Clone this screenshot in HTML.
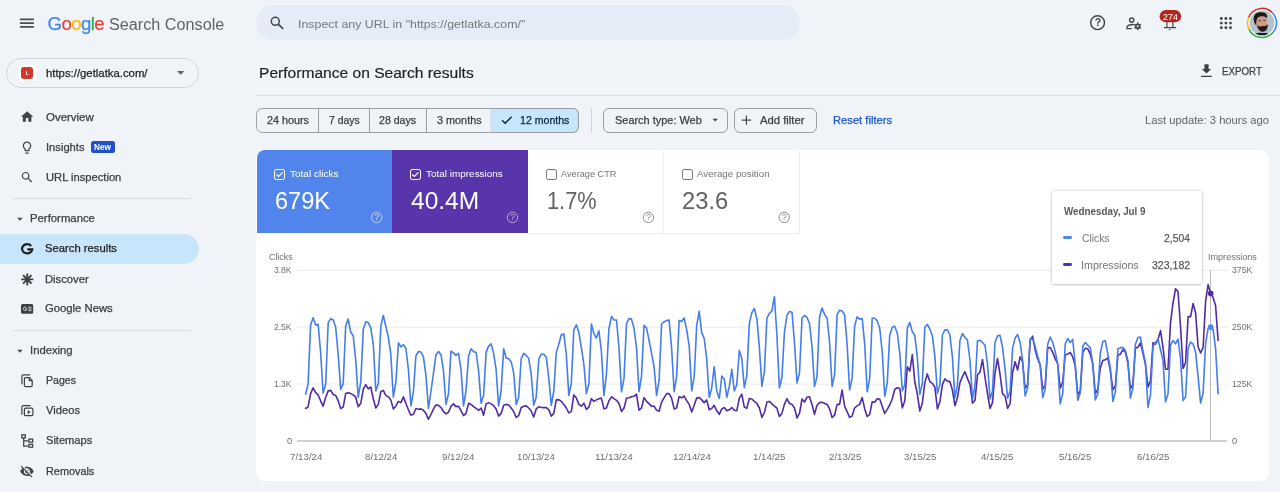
<!DOCTYPE html>
<html lang="en"><head><meta charset="utf-8"><title>Performance on Search results</title>
<style>
*{box-sizing:border-box;margin:0;padding:0}
html,body{width:1280px;height:492px;overflow:hidden;background:#f0f4f9;font-family:"Liberation Sans",sans-serif;color:#1f1f1f}
.abs{position:absolute}
.t{position:absolute;white-space:nowrap;line-height:1;transform-origin:0 0}
svg{position:absolute;overflow:visible}
#search{left:255.5px;top:5.1px;width:544.4px;height:35.3px;border-radius:17.65px;background:#e5ecf8}
#prop{left:6.2px;top:58px;width:192.6px;height:29.8px;border-radius:15px;border:1px solid #cfd3d8}
.hr{position:absolute;left:12.5px;width:177.5px;height:1px;background:#d9dce1}
#sel{left:0;top:234px;width:199px;height:30px;border-radius:0 15px 15px 0;background:#c7e6fc}
#mainhr{left:256px;top:95px;width:1024px;height:1px;background:#dcdfe4}
.chip{position:absolute;top:107.6px;height:25.1px;border:1px solid #9b9ea4}
#card{left:255.6px;top:149.5px;width:1013.5px;height:331.4px;border-radius:9px;background:#fff}
.tile{position:absolute;top:150.1px;height:82.9px}
.cb{position:absolute;top:168.9px;width:10.9px;height:10.9px;border-radius:2.2px}
#tip{left:1051.7px;top:191px;width:150px;height:93.4px;background:rgba(255,255,255,.94);border-radius:2px;box-shadow:0 0 3px rgba(0,0,0,.28),0 1px 2px rgba(0,0,0,.12);z-index:4}
#root{position:absolute;left:0;top:0;width:1280px;height:492px;will-change:transform}
</style></head><body><div id="root">
<!-- header -->
<svg style="left:0;top:0" width="1280" height="100" viewBox="0 0 1280 100">
<path d="M19.9 19.4h14M19.9 23.1h14M19.9 26.85h14" stroke="#4d5053" stroke-width="1.7" fill="none"/>
</svg>
<div class="t" style="left:47.6px;top:14.9px;font-size:18.6px;letter-spacing:-.62px;-webkit-text-stroke:.25px"><span style="color:#4285f4">G</span><span style="color:#ea4335">o</span><span style="color:#fbbc05">o</span><span style="color:#4285f4">g</span><span style="color:#34a853">l</span><span style="color:#ea4335">e</span></div>
<div class="abs" id="search"></div>
<svg style="left:270.2px;top:15.8px" width="14" height="14" viewBox="0 0 14 14"><circle cx="5.3" cy="5.3" r="4" stroke="#444746" stroke-width="1.5" fill="none"/><path d="M8.2 8.2l5 4.700" stroke="#444746" stroke-width="1.6"/></svg>


<!-- header right icons -->
<svg style="left:0;top:0;z-index:3" width="1280" height="100" viewBox="0 0 1280 100">
<circle cx="1097.600" cy="22.700" r="6.900" fill="none" stroke="#444746" stroke-width="1.450"/>
<!-- person + gear -->
<g fill="none" stroke="#444746" stroke-width="1.400">
<circle cx="1131.700" cy="20.100" r="2.100"/>
<path d="M1134.500 24.600C1131 24.100 1127 25.300 1127 27.300V28.600H1131.800"/>
</g>
<g transform="translate(1137.700 26.300)" fill="#444746">
<circle r="2.550"/>
<g id="tooth"><rect x="-.85" y="-3.700" width="1.700" height="7.400" rx=".3"/></g>
<rect x="-.85" y="-3.700" width="1.700" height="7.400" rx=".3" transform="rotate(60)"/>
<rect x="-.85" y="-3.700" width="1.700" height="7.400" rx=".3" transform="rotate(120)"/>
<circle r="1" fill="#f0f4f9"/>
</g>
<!-- bell -->
<g fill="none" stroke="#444746" stroke-width="1.200">
<path d="M1166.900 20V27.400M1172.900 20V27.400M1163.900 27.550H1176.100"/>
</g>
<path d="M1168.500 29.300h2.600l-1.300 1.200z" fill="#444746"/>
<rect x="1159.600" y="10.100" width="21.500" height="12.200" rx="6.100" fill="#b3261e"/>
<!-- apps -->
<g fill="#444746">
<circle cx="1221.300" cy="18.500" r="1.450"/><circle cx="1225.900" cy="18.500" r="1.450"/><circle cx="1230.500" cy="18.500" r="1.450"/>
<circle cx="1221.300" cy="23.100" r="1.450"/><circle cx="1225.900" cy="23.100" r="1.450"/><circle cx="1230.500" cy="23.100" r="1.450"/>
<circle cx="1221.300" cy="27.700" r="1.450"/><circle cx="1225.900" cy="27.700" r="1.450"/><circle cx="1230.500" cy="27.700" r="1.450"/>
</g>
<!-- avatar -->
<g transform="translate(1262.050 22.950)">
<circle r="15.100" fill="#fff"/>
<g fill="none" stroke-width="1.600">
<path d="M-13.430 -5.430A14.500 14.500 0 0 1 10.250 -10.250" stroke="#d93025"/>
<path d="M10.250 -10.250A14.500 14.500 0 0 1 11.100 9.320" stroke="#4285f4"/>
<path d="M11.100 9.320A14.500 14.500 0 0 1 -13.140 6.130" stroke="#34a853"/>
<path d="M-13.140 6.130A14.500 14.500 0 0 1 -13.430 -5.430" stroke="#fbbc04"/>
</g>
<clipPath id="avc"><circle r="12.400"/></clipPath>
<g clip-path="url(#avc)">
<rect x="-13" y="-13" width="26" height="26" fill="#b3c2ce"/>
<path d="M-9 13C-8 10 -4 9.600 -1 10C3 9.800 8 10 10 13z" fill="#1a1a1c"/>
<ellipse cx="-.5" cy="-.5" rx="5.900" ry="7.600" fill="#cf9a82" transform="rotate(-10)"/>
<path d="M-7.800 -.5C-10 -7.500 -5.500 -11.800 -.5 -10.600C3.500 -11 5.800 -8 5 -4.800C2.500 -7.200 -1.500 -7.400 -4 -5.600C-5.600 -4.200 -6 -.5 -5.900 2.500z" fill="#1c1818"/>
<path d="M-5.200 1.500C-4.800 5.500 -2.500 8.800 .8 8.700C4.200 8.300 6 5.500 5.600 1C4.500 3.400 2.600 3.200 1 3C-1 3.300 -3.600 4.600 -5.200 1.500z" fill="#241b19"/>
<path d="M-3.600 -2.200h2.200M1.200 -2.600h2.200" stroke="#3a2620" stroke-width=".9" fill="none"/>
</g>
</g>
<!-- export -->
<path d="M1204.400 64.300h4.200v4.700h2.500l-4.600 4.600-4.600-4.600h2.500z M1201.100 75.700h10.700v1.400h-10.700z" fill="#3c4043"/>
</svg>
<div class="t" style="left:1094.700px;top:17.400px;font-size:10.500px;color:#444746;font-weight:700;z-index:3">?</div>

<!-- property -->
<div class="abs" id="prop"></div>
<div class="abs" style="left:18.75px;top:64.65px;width:17.35px;height:16.85px;border-radius:1.5px;background:#fff"></div>
<div class="abs" style="left:21.1px;top:66.8px;width:12.4px;height:12.2px;border-radius:3px;background:#d0382c"></div>
<svg style="left:176.9px;top:71.2px" width="7.4" height="3.8" viewBox="0 0 8 4"><path d="M0 0h8L4 4z" fill="#5f6368"/></svg>

<!-- nav -->
<div class="hr" style="top:198px"></div>
<div class="abs" id="sel"></div>
<div class="hr" style="top:330px"></div>
<div class="abs" style="left:91.1px;top:140.9px;width:23.5px;height:12.2px;border-radius:2.5px;background:#2250c9"></div>


<!-- nav icons -->
<svg style="left:0;top:0" width="240" height="492" viewBox="0 0 240 492" fill="#424547">
<g transform="translate(19.8 109.5) scale(.61)"><path d="M10 20v-6h4v6h5v-8h3L12 3 2 12h3v8z"/></g>
<g transform="translate(19.7 140.3) scale(.61)"><path d="M9 21c0 .55.45 1 1 1h4c.55 0 1-.45 1-1v-1H9v1zm3-19C8.14 2 5 5.14 5 9c0 2.38 1.19 4.47 3 5.74V17c0 .55.45 1 1 1h6c.55 0 1-.45 1-1v-2.26c1.81-1.27 3-3.36 3-5.74 0-3.86-3.14-7-7-7zm2.85 11.1l-.85.6V16h-4v-2.3l-.85-.6C7.8 12.16 7 10.63 7 9c0-2.76 2.24-5 5-5s5 2.24 5 5c0 1.63-.8 3.16-2.15 4.1z"/></g>
<g transform="translate(19.9 170.1) scale(.6)"><path d="M15.5 14h-.79l-.28-.27C15.41 12.59 16 11.11 16 9.5 16 5.91 13.09 3 9.500 3S3 5.91 3 9.500 5.91 16 9.500 16c1.610 0 3.090-.59 4.230-1.570l.27.28v.79l5 4.990L20.490 19l-4.990-5zm-6 0C7.010 14 5 11.990 5 9.500S7.010 5 9.500 5 14 7.010 14 9.500 11.990 14 9.500 14z"/></g>
<!-- triangles -->
<path d="M17.200 217.800h5.400l-2.700 3z M17.200 349.700h5.400l-2.700 3z" fill="#444746"/>
<!-- G -->
<path d="M31.200 245.900A5.150 4.550 0 1 0 32.300 249.300H27.300" fill="none" stroke="#1f1f1f" stroke-width="2.200"/>
<!-- asterisk -->
<g stroke="#3c4043" stroke-width="1.900" fill="none"><path d="M27.300 273.400v12M21.300 279.400h12M23.060 275.160l8.480 8.480M31.540 275.160l-8.480 8.480"/></g>
<!-- news -->
<rect x="21" y="304" width="12.200" height="9.700" rx="1.500" fill="#3c4043"/>
<path d="M26.300 307.500A1.700 1.700 0 1 0 26.800 308.900H25.200" fill="none" stroke="#f0f4f9" stroke-width=".8"/>
<path d="M28.300 307.200h3.200M28.300 308.900h3.200M28.300 310.600h3.200" stroke="#f0f4f9" stroke-width=".8" fill="none"/>
<!-- pages -->
<g fill="none" stroke="#3c4043" stroke-width="1.200" stroke-linejoin="round">
<path d="M30 374.900H23.400a1.500 1.500 0 0 0-1.500 1.500V384.300"/>
<path d="M25.600 377.600H29.500L32.200 380.400V385.500a1.200 1.200 0 0 1-1.200 1.200H25.600a1.200 1.200 0 0 1-1.200-1.200V378.800a1.200 1.200 0 0 1 1.200-1.200z"/>
<path d="M29.300 377.800V380.600H32"/>
<!-- videos -->
<path d="M30.600 405.600H23.400a1.500 1.500 0 0 0-1.500 1.500V414.800"/>
<rect x="24.400" y="408.100" width="8.500" height="7.500" rx="1.100"/>
</g>
<path d="M27.700 409.900L30.700 412.100L27.700 414.300z"/>
<!-- sitemaps -->
<g fill="none" stroke="#3c4043" stroke-width="1.250">
<rect x="21.850" y="434.850" width="3.500" height="3.100"/>
<path d="M23.700 438V446H28.300M23.700 440.800H28.300"/>
<rect x="28.850" y="439.150" width="3.800" height="3"/>
<rect x="28.850" y="444.350" width="3.800" height="2.800"/>
</g>
<!-- removals -->
<g transform="translate(19.500 463.900) scale(.62)"><path d="M12 7c2.760 0 5 2.240 5 5 0 .65-.13 1.260-.36 1.830l2.920 2.920c1.510-1.260 2.700-2.890 3.430-4.750-1.730-4.390-6-7.500-11-7.500-1.400 0-2.740.25-3.980.7l2.160 2.160C10.740 7.130 11.350 7 12 7zM2 4.270l2.280 2.280.46.46C3.080 8.300 1.780 10.020 1 12c1.730 4.390 6 7.500 11 7.500 1.550 0 3.030-.3 4.380-.84l.42.42L19.730 22 21 20.730 3.270 3 2 4.270zM7.530 9.800l1.550 1.550c-.05.21-.08.43-.08.65 0 1.660 1.340 3 3 3 .22 0 .44-.03.65-.08l1.550 1.550c-.67.33-1.410.53-2.200.53-2.760 0-5-2.240-5-5 0-.79.200-1.530.53-2.200zm4.310-.78l3.150 3.150.02-.16c0-1.660-1.340-3-3-3l-.17.010z"/></g>
</svg>

<!-- main -->
<div class="abs" id="mainhr"></div>
<div class="chip" style="left:255.8px;width:323px;border-radius:6.5px"></div>
<div class="chip" style="left:489.7px;width:89.1px;border-radius:0 6px 6px 0;background:#c7e6fc;border-left-color:#d5dde6"></div>
<div class="abs" style="left:318px;top:108px;width:1px;height:24.5px;background:#9b9ea4"></div>
<div class="abs" style="left:369px;top:108px;width:1px;height:24.5px;background:#9b9ea4"></div>
<div class="abs" style="left:425.6px;top:108px;width:1px;height:24.5px;background:#9b9ea4"></div>
<div class="abs" style="left:591px;top:108px;width:1px;height:24.5px;background:#d0d4d9"></div>
<div class="chip" style="left:603px;width:124.5px;border-radius:6px"></div>
<div class="chip" style="left:733.8px;width:83px;border-radius:6px"></div>

<div class="abs" id="card"></div>
<div class="tile" style="left:256.6px;width:136px;background:#5285ec;border-radius:8px 0 0 0"></div>
<div class="tile" style="left:392.4px;width:135.6px;background:#5935ab"></div>
<div class="abs" style="left:528px;top:232.5px;width:272px;height:1px;background:#ebebeb"></div>
<div class="abs" style="left:663px;top:150px;width:1px;height:83px;background:#efefef"></div>
<div class="abs" style="left:799px;top:150px;width:1px;height:83.5px;background:#ebebeb"></div>
<div class="cb" style="left:274.1px;border:1.4px solid #fff"></div>
<div class="cb" style="left:409.8px;border:1.4px solid #fff"></div>
<div class="cb" style="left:546px;border:1.2px solid #757575"></div>
<div class="cb" style="left:682px;border:1.2px solid #757575"></div>

<svg id="chart" style="left:0;top:0" width="1280" height="492" viewBox="0 0 1280 492">
<g stroke="#ebebeb" stroke-width="1" fill="none"><path d="M297 270.3H1227.5M297 327.2H1227.5M297 384.1H1227.5"/></g>
<path d="M297 441H1227" stroke="#a6a6a6" stroke-width="1.1" fill="none"/>
<path d="M1210.5 270V441" stroke="#bcbcbc" stroke-width="1" fill="none"/>
<path d="M305.6 408.5 L308.1 406.8 L310.6 393.6 L313.1 387.9 L315.6 392.7 L318.1 394.9 L320.6 400.8 L323.1 406.2 L325.7 397.2 L328.2 390.9 L330.7 390.4 L333.2 394.5 L335.7 395.4 L338.2 400.8 L340.7 408.5 L343.2 407.1 L345.7 393.6 L348.2 392.7 L350.7 393.6 L353.2 394.9 L355.7 397.2 L358.2 406.8 L360.8 403.2 L363.3 389.1 L365.8 384.6 L368.3 388.8 L370.8 387.0 L373.3 399.0 L375.8 408.0 L378.3 404.4 L380.8 391.8 L383.3 390.4 L385.8 395.4 L388.3 396.7 L390.8 399.9 L393.3 408.9 L395.9 405.9 L398.4 401.4 L400.9 402.6 L403.4 396.9 L405.9 403.5 L408.4 409.8 L410.9 415.2 L413.4 414.3 L415.9 408.5 L418.4 409.3 L420.9 408.9 L423.4 410.3 L425.9 413.4 L428.4 419.2 L431.0 414.3 L433.5 408.9 L436.0 405.0 L438.5 405.3 L441.0 407.5 L443.5 411.6 L446.0 413.9 L448.5 412.1 L451.0 406.2 L453.5 403.9 L456.0 406.6 L458.5 406.2 L461.0 410.7 L463.5 415.6 L466.0 413.4 L468.6 403.2 L471.1 404.4 L473.6 406.6 L476.1 408.4 L478.6 410.3 L481.1 408.0 L483.6 415.2 L486.1 403.9 L488.6 402.6 L491.1 403.9 L493.6 405.7 L496.1 408.9 L498.6 416.1 L501.1 413.4 L503.7 405.3 L506.2 404.4 L508.7 405.0 L511.2 408.0 L513.7 411.6 L516.2 417.4 L518.7 415.7 L521.2 407.5 L523.7 406.2 L526.2 405.9 L528.7 408.0 L531.2 411.0 L533.7 417.0 L536.2 408.9 L538.8 406.8 L541.3 407.5 L543.8 407.6 L546.3 407.6 L548.8 409.8 L551.3 416.1 L553.8 413.4 L556.3 399.9 L558.8 399.6 L561.3 401.4 L563.8 404.4 L566.3 408.0 L568.8 412.9 L571.3 411.6 L573.8 394.9 L576.4 398.1 L578.9 404.4 L581.4 406.2 L583.9 403.2 L586.4 409.4 L588.9 407.1 L591.4 398.5 L593.9 401.4 L596.4 399.9 L598.9 398.7 L601.4 398.1 L603.9 408.9 L606.4 408.0 L608.9 400.8 L611.5 396.9 L614.0 398.7 L616.5 400.3 L619.0 403.5 L621.5 411.6 L624.0 408.0 L626.5 398.1 L629.0 397.8 L631.5 396.7 L634.0 396.3 L636.5 394.2 L639.0 410.2 L641.5 408.0 L644.0 397.8 L646.6 401.4 L649.1 403.9 L651.6 406.2 L654.1 406.2 L656.6 410.3 L659.1 411.2 L661.6 402.1 L664.1 397.8 L666.6 393.6 L669.1 393.6 L671.6 398.1 L674.1 408.9 L676.6 408.0 L679.1 396.7 L681.7 397.8 L684.2 396.0 L686.7 400.8 L689.2 404.4 L691.7 412.0 L694.2 405.3 L696.7 398.1 L699.2 397.6 L701.7 399.9 L704.2 402.6 L706.7 399.9 L709.2 409.8 L711.7 408.4 L714.2 405.3 L716.7 410.7 L719.3 414.3 L721.8 408.9 L724.3 407.5 L726.8 410.7 L729.3 409.8 L731.8 407.5 L734.3 410.3 L736.8 410.7 L739.3 398.1 L741.8 394.2 L744.3 407.1 L746.8 408.4 L749.3 398.5 L751.8 399.0 L754.4 401.4 L756.9 403.5 L759.4 408.0 L761.9 417.4 L764.4 412.5 L766.9 402.1 L769.4 401.4 L771.9 403.9 L774.4 406.2 L776.9 408.0 L779.4 416.5 L781.9 413.4 L784.4 404.4 L786.9 398.7 L789.5 403.5 L792.0 404.4 L794.5 408.0 L797.0 417.9 L799.5 413.4 L802.0 399.0 L804.5 402.1 L807.0 397.2 L809.5 396.7 L812.0 404.4 L814.5 414.3 L817.0 405.3 L819.5 402.6 L822.0 402.3 L824.5 403.2 L827.1 404.4 L829.6 408.9 L832.1 417.5 L834.6 415.2 L837.1 404.4 L839.6 404.4 L842.1 390.0 L844.6 406.2 L847.1 411.6 L849.6 417.4 L852.1 416.1 L854.6 408.0 L857.1 405.9 L859.6 404.4 L862.2 397.6 L864.7 408.9 L867.2 416.5 L869.7 414.3 L872.2 401.7 L874.7 402.3 L877.2 398.7 L879.7 399.0 L882.2 406.2 L884.7 413.4 L887.2 409.4 L889.7 405.0 L892.2 399.0 L894.7 389.5 L897.3 387.7 L899.8 388.6 L902.3 408.0 L904.8 400.8 L907.3 366.7 L909.8 371.2 L912.3 354.5 L914.8 382.0 L917.3 393.6 L919.8 411.1 L922.3 403.5 L924.8 382.9 L927.3 373.9 L929.8 381.6 L932.4 383.4 L934.9 387.3 L937.4 408.9 L939.9 401.7 L942.4 384.6 L944.9 378.9 L947.4 381.1 L949.9 381.6 L952.4 390.0 L954.9 405.7 L957.4 398.1 L959.9 382.9 L962.4 376.6 L964.9 371.6 L967.4 378.4 L970.0 384.6 L972.5 403.2 L975.0 400.3 L977.5 374.8 L980.0 372.1 L982.5 359.5 L985.0 377.5 L987.5 393.6 L990.0 408.4 L992.5 402.6 L995.0 373.0 L997.5 358.5 L1000.0 374.0 L1002.5 393.6 L1005.1 396.3 L1007.6 408.4 L1010.1 403.5 L1012.6 372.5 L1015.1 361.8 L1017.6 370.0 L1020.1 356.8 L1022.6 362.0 L1025.1 388.2 L1027.6 384.6 L1030.1 340.7 L1032.6 336.2 L1035.1 349.7 L1037.6 358.7 L1040.2 365.0 L1042.7 389.1 L1045.2 385.5 L1047.7 347.9 L1050.2 347.5 L1052.7 352.4 L1055.2 358.7 L1057.7 364.0 L1060.2 388.2 L1062.7 382.0 L1065.2 354.7 L1067.7 354.2 L1070.2 352.4 L1072.7 356.9 L1075.2 365.9 L1077.8 394.5 L1080.3 391.0 L1082.8 352.4 L1085.3 348.3 L1087.8 348.8 L1090.3 354.2 L1092.8 364.0 L1095.3 393.6 L1097.8 389.1 L1100.3 368.0 L1102.8 360.5 L1105.3 359.8 L1107.8 357.8 L1110.3 370.3 L1112.9 389.8 L1115.4 385.6 L1117.9 355.1 L1120.4 354.2 L1122.9 349.7 L1125.4 352.4 L1127.9 363.0 L1130.4 388.5 L1132.9 384.3 L1135.4 347.9 L1137.9 347.4 L1140.4 342.9 L1142.9 353.3 L1145.4 364.0 L1148.0 387.0 L1150.5 380.7 L1153.0 342.6 L1155.5 344.2 L1158.0 339.6 L1160.5 330.6 L1163.0 347.4 L1165.5 369.2 L1168.0 369.2 L1170.5 322.8 L1173.0 303.0 L1175.5 288.9 L1178.0 291.5 L1180.5 326.5 L1183.1 368.5 L1185.6 362.5 L1188.1 316.5 L1190.6 316.6 L1193.1 303.5 L1195.6 313.0 L1198.1 346.8 L1200.6 353.0 L1203.1 347.5 L1205.6 301.1 L1208.1 284.6 L1210.6 293.4 L1213.1 297.4 L1215.6 305.7 L1218.1 340.4" stroke="#502ba7" stroke-width="1.6" fill="none" stroke-linejoin="round" stroke-linecap="round"/>
<path d="M305.6 394.2 L308.1 383.7 L310.6 324.9 L313.1 317.7 L315.6 324.9 L318.1 324.2 L320.6 352.0 L323.1 393.1 L325.7 383.7 L328.2 322.7 L330.7 318.6 L333.2 320.0 L335.7 327.2 L338.2 355.0 L340.7 389.5 L343.2 383.7 L345.7 326.0 L348.2 319.1 L350.7 332.0 L353.2 335.7 L355.7 360.0 L358.2 397.2 L360.8 382.0 L363.3 329.0 L365.8 321.8 L368.3 322.7 L370.8 328.1 L373.3 344.3 L375.8 391.0 L378.3 383.7 L380.8 326.3 L383.3 315.5 L385.8 326.3 L388.3 337.1 L390.8 354.2 L393.3 397.2 L395.9 382.0 L398.4 342.9 L400.9 347.0 L403.4 344.7 L405.9 348.3 L408.4 369.5 L410.9 405.9 L413.4 391.8 L415.9 356.0 L418.4 351.5 L420.9 352.0 L423.4 356.9 L425.9 374.8 L428.4 408.4 L431.0 391.0 L433.5 373.0 L436.0 354.7 L438.5 351.5 L441.0 354.7 L443.5 371.0 L446.0 404.4 L448.5 393.6 L451.0 351.1 L453.5 352.9 L456.0 355.4 L458.5 353.3 L461.0 369.4 L463.5 405.9 L466.0 391.0 L468.6 356.0 L471.1 348.8 L473.6 351.8 L476.1 352.4 L478.6 371.0 L481.1 403.2 L483.6 395.4 L486.1 352.4 L488.6 346.1 L491.1 343.9 L493.6 353.3 L496.1 369.5 L498.6 405.9 L501.1 391.0 L503.7 348.8 L506.2 358.3 L508.7 358.7 L511.2 361.9 L513.7 373.0 L516.2 404.4 L518.7 397.2 L521.2 358.7 L523.7 353.3 L526.2 355.4 L528.7 358.3 L531.2 374.0 L533.7 405.3 L536.2 397.2 L538.8 359.0 L541.3 354.2 L543.8 354.2 L546.3 357.2 L548.8 378.4 L551.3 405.3 L553.8 391.0 L556.3 352.4 L558.8 344.3 L561.3 334.8 L563.8 333.9 L566.3 354.2 L568.8 395.4 L571.3 383.7 L573.8 329.9 L576.4 324.9 L578.9 332.6 L581.4 348.0 L583.9 364.5 L586.4 393.6 L588.9 383.7 L591.4 324.0 L593.9 333.9 L596.4 338.0 L598.9 330.8 L601.4 351.5 L603.9 395.4 L606.4 374.8 L608.9 329.0 L611.5 316.4 L614.0 320.0 L616.5 320.0 L619.0 347.9 L621.5 391.8 L624.0 378.4 L626.5 323.6 L629.0 318.6 L631.5 319.1 L634.0 328.1 L636.5 347.9 L639.0 391.8 L641.5 376.6 L644.0 325.4 L646.6 328.1 L649.1 340.7 L651.6 353.3 L654.1 367.0 L656.6 395.4 L659.1 380.2 L661.6 324.0 L664.1 321.8 L666.6 320.6 L669.1 320.0 L671.6 347.9 L674.1 391.8 L676.6 376.6 L679.1 320.6 L681.7 321.5 L684.2 317.9 L686.7 329.9 L689.2 346.1 L691.7 391.0 L694.2 376.6 L696.7 325.4 L699.2 311.4 L701.7 332.6 L704.2 338.5 L706.7 358.7 L709.2 397.2 L711.7 388.2 L714.2 366.7 L716.7 391.0 L719.3 398.5 L721.8 376.0 L724.3 379.3 L726.8 397.2 L729.3 386.4 L731.8 369.3 L734.3 391.0 L736.8 384.6 L739.3 350.6 L741.8 358.2 L744.3 387.7 L746.8 375.7 L749.3 323.6 L751.8 312.9 L754.4 308.4 L756.9 319.1 L759.4 347.9 L761.9 386.4 L764.4 371.2 L766.9 318.2 L769.4 313.4 L771.9 311.0 L774.4 296.7 L776.9 335.0 L779.4 387.9 L781.9 377.5 L784.4 332.6 L786.9 315.5 L789.5 311.4 L792.0 312.3 L794.5 342.5 L797.0 382.9 L799.5 373.0 L802.0 318.2 L804.5 315.5 L807.0 317.3 L809.5 323.6 L812.0 346.1 L814.5 386.4 L817.0 376.6 L819.5 317.3 L822.0 308.0 L824.5 314.1 L827.1 318.2 L829.6 342.5 L832.1 386.4 L834.6 374.8 L837.1 314.6 L839.6 310.2 L842.1 311.0 L844.6 314.6 L847.1 344.3 L849.6 390.0 L852.1 378.4 L854.6 326.3 L857.1 316.8 L859.6 319.1 L862.2 318.6 L864.7 344.3 L867.2 391.8 L869.7 378.4 L872.2 318.2 L874.7 318.2 L877.2 320.9 L879.7 328.1 L882.2 351.5 L884.7 396.3 L887.2 383.7 L889.7 335.3 L892.2 327.2 L894.7 326.3 L897.3 333.2 L899.8 353.3 L902.3 391.0 L904.8 384.6 L907.3 328.1 L909.8 322.4 L912.3 331.7 L914.8 335.3 L917.3 356.9 L919.8 394.2 L922.3 383.7 L924.8 327.2 L927.3 324.5 L929.8 329.0 L932.4 335.9 L934.9 356.9 L937.4 393.3 L939.9 384.6 L942.4 335.0 L944.9 329.9 L947.4 329.9 L949.9 335.0 L952.4 356.9 L954.9 398.1 L957.4 385.5 L959.9 340.7 L962.4 333.5 L964.9 337.5 L967.4 339.8 L970.0 360.5 L972.5 399.0 L975.0 386.0 L977.5 340.7 L980.0 340.3 L982.5 342.5 L985.0 345.2 L987.5 364.0 L990.0 399.0 L992.5 391.0 L995.0 342.5 L997.5 335.9 L1000.0 335.3 L1002.5 347.0 L1005.1 369.5 L1007.6 398.1 L1010.1 391.0 L1012.6 347.9 L1015.1 338.0 L1017.6 334.4 L1020.1 342.5 L1022.6 360.5 L1025.1 396.0 L1027.6 388.2 L1030.1 338.9 L1032.6 338.9 L1035.1 346.1 L1037.6 356.0 L1040.2 365.0 L1042.7 397.8 L1045.2 389.1 L1047.7 344.3 L1050.2 337.1 L1052.7 342.5 L1055.2 351.5 L1057.7 364.0 L1060.2 403.9 L1062.7 393.6 L1065.2 344.3 L1067.7 338.5 L1070.2 342.5 L1072.7 339.4 L1075.2 364.0 L1077.8 400.3 L1080.3 392.7 L1082.8 346.1 L1085.3 342.5 L1087.8 345.2 L1090.3 347.9 L1092.8 364.0 L1095.3 399.9 L1097.8 393.6 L1100.3 353.3 L1102.8 341.6 L1105.3 340.7 L1107.8 354.2 L1110.3 367.7 L1112.9 401.4 L1115.4 391.5 L1117.9 348.8 L1120.4 347.9 L1122.9 347.4 L1125.4 350.6 L1127.9 360.5 L1130.4 398.1 L1132.9 388.3 L1135.4 344.3 L1137.9 337.5 L1140.4 337.1 L1142.9 350.6 L1145.4 362.3 L1148.0 407.4 L1150.5 394.7 L1153.0 346.1 L1155.5 342.5 L1158.0 338.9 L1160.5 349.7 L1163.0 360.5 L1165.5 402.0 L1168.0 393.8 L1170.5 345.2 L1173.0 340.6 L1175.5 343.8 L1178.0 339.0 L1180.5 358.2 L1183.1 400.6 L1185.6 396.7 L1188.1 348.3 L1190.6 342.0 L1193.1 344.1 L1195.6 352.3 L1198.1 376.6 L1200.6 403.1 L1203.1 393.0 L1205.6 343.2 L1208.1 328.5 L1210.6 327.1 L1213.1 329.4 L1215.6 348.7 L1218.1 393.6" stroke="#437dee" stroke-width="1.6" fill="none" stroke-linejoin="round" stroke-linecap="round"/>
<circle cx="1210.7" cy="327.1" r="2.8" fill="#4a86f0"/>
<circle cx="1210.7" cy="293.4" r="2.8" fill="#502ba7"/>
</svg>
<div class="abs" id="tip"></div>
<div class="abs" style="left:1063.4px;top:236.3px;width:8.6px;height:2.7px;border-radius:1.4px;background:#4a86f0;z-index:5"></div>
<div class="abs" style="left:1063.4px;top:263.4px;width:8.6px;height:2.9px;border-radius:1.4px;background:#5530ab;z-index:5"></div>

<svg style="left:0;top:0;z-index:3" width="1280" height="492" viewBox="0 0 1280 492">
<path d="M26.500 71.300v3.200h1.700" stroke="#fff" stroke-width=".9" fill="none"/>
<path d="M502.100 120.200L505.100 123.300L511.600 116.800" stroke="#0a2540" stroke-width="1.400" fill="none"/>
<path d="M712.500 118.800h5.500l-2.750 2.750z" fill="#444746"/>
<path d="M746.400 115.500v9.300M741.750 120.150h9.300" stroke="#444746" stroke-width="1.150" fill="none"/>
<path d="M276.500 174.500l2.100 2 4.200-4.200" stroke="#fff" stroke-width="1.200" fill="none"/>
<path d="M412.200 174.500l2.100 2 4.200-4.200" stroke="#fff" stroke-width="1.200" fill="none"/>
<g fill="none" stroke-width="1">
<circle cx="376.700" cy="217.400" r="5.200" stroke="rgba(255,255,255,.62)"/>
<circle cx="512.500" cy="217.400" r="5.200" stroke="rgba(255,255,255,.55)"/>
<circle cx="648.400" cy="217.400" r="5.200" stroke="#8c8c8c"/>
<circle cx="784.200" cy="217.400" r="5.200" stroke="#8c8c8c"/>
</g>
</svg>
<div class="t" style="left:374.2px;top:213px;font-size:9px;color:rgba(255,255,255,.7);z-index:3">?</div>
<div class="t" style="left:510.0px;top:213px;font-size:9px;color:rgba(255,255,255,.62);z-index:3">?</div>
<div class="t" style="left:645.9px;top:213px;font-size:9px;color:#858585;z-index:3">?</div>
<div class="t" style="left:781.7px;top:213px;font-size:9px;color:#858585;z-index:3">?</div>
<div class="t" style="left:108.90px;top:17.00px;font-size:16px;color:#5f6368;transform:scaleX(1.0128)">Search Console</div>
<div class="t" style="left:298.25px;top:19.01px;font-size:11.8px;color:#74787c;transform:scaleX(1.0501)">Inspect any URL in &quot;https://getlatka.com/&quot;</div>
<div class="t" style="left:45.50px;top:68.01px;font-size:10.9px;color:#1f1f1f;transform:scaleX(1.0413);-webkit-text-stroke:.25px currentColor">https://getlatka.com/</div>
<div class="t" style="left:45.60px;top:113.00px;font-size:10.2px;color:#3c4043;transform:scaleX(1.1253);-webkit-text-stroke:.25px currentColor">Overview</div>
<div class="t" style="left:46.40px;top:143.01px;font-size:10.2px;color:#3c4043;transform:scaleX(1.0967);-webkit-text-stroke:.25px currentColor">Insights</div>
<div class="t" style="left:45.60px;top:173.01px;font-size:10.2px;color:#3c4043;transform:scaleX(1.0962);-webkit-text-stroke:.25px currentColor">URL inspection</div>
<div class="t" style="left:94.30px;top:143.01px;font-size:8.6px;color:#fff;transform:scaleX(0.9619);font-weight:700">New</div>
<div class="t" style="left:30.30px;top:214.00px;font-size:10.2px;color:#3c4043;transform:scaleX(1.1133);-webkit-text-stroke:.25px currentColor">Performance</div>
<div class="t" style="left:45.40px;top:244.01px;font-size:10.2px;color:#1f1f1f;transform:scaleX(1.1058);-webkit-text-stroke:.25px currentColor">Search results</div>
<div class="t" style="left:45.40px;top:275.00px;font-size:10.2px;color:#3c4043;transform:scaleX(1.1011);-webkit-text-stroke:.25px currentColor">Discover</div>
<div class="t" style="left:45.40px;top:304.01px;font-size:10.2px;color:#3c4043;transform:scaleX(1.1071);-webkit-text-stroke:.25px currentColor">Google News</div>
<div class="t" style="left:30.30px;top:346.01px;font-size:10.2px;color:#3c4043;transform:scaleX(1.1068);-webkit-text-stroke:.25px currentColor">Indexing</div>
<div class="t" style="left:45.50px;top:376.00px;font-size:10.2px;color:#3c4043;transform:scaleX(1.0385);-webkit-text-stroke:.25px currentColor">Pages</div>
<div class="t" style="left:45.50px;top:406.01px;font-size:10.2px;color:#3c4043;transform:scaleX(1.0981);-webkit-text-stroke:.25px currentColor">Videos</div>
<div class="t" style="left:45.50px;top:436.01px;font-size:10.2px;color:#3c4043;transform:scaleX(1.0880);-webkit-text-stroke:.25px currentColor">Sitemaps</div>
<div class="t" style="left:45.50px;top:467.00px;font-size:10.2px;color:#3c4043;transform:scaleX(1.0664);-webkit-text-stroke:.25px currentColor">Removals</div>
<div class="t" style="left:259.49px;top:66.01px;font-size:14px;color:#1f1f1f;transform:scaleX(1.1126);-webkit-text-stroke:.18px currentColor">Performance on Search results</div>
<div class="t" style="left:1221.90px;top:67.01px;font-size:10.3px;color:#3c4043;transform:scaleX(0.9449);-webkit-text-stroke:.25px currentColor">EXPORT</div>
<div class="t" style="left:266.50px;top:116.01px;font-size:10.2px;color:#3c4043;transform:scaleX(1.0594);-webkit-text-stroke:.25px currentColor">24 hours</div>
<div class="t" style="left:328.60px;top:116.01px;font-size:10.2px;color:#3c4043;transform:scaleX(1.0227);-webkit-text-stroke:.25px currentColor">7 days</div>
<div class="t" style="left:379.30px;top:116.01px;font-size:10.2px;color:#3c4043;transform:scaleX(1.0397);-webkit-text-stroke:.25px currentColor">28 days</div>
<div class="t" style="left:436.50px;top:116.01px;font-size:10.2px;color:#3c4043;transform:scaleX(1.0643);-webkit-text-stroke:.25px currentColor">3 months</div>
<div class="t" style="left:519.80px;top:116.01px;font-size:10.2px;color:#0a2540;transform:scaleX(1.0384);-webkit-text-stroke:.25px currentColor">12 months</div>
<div class="t" style="left:615.00px;top:116.01px;font-size:10.4px;color:#3c4043;transform:scaleX(1.0530);-webkit-text-stroke:.25px currentColor">Search type: Web</div>
<div class="t" style="left:759.50px;top:116.01px;font-size:10.4px;color:#3c4043;transform:scaleX(1.0832);-webkit-text-stroke:.25px currentColor">Add filter</div>
<div class="t" style="left:832.50px;top:116.01px;font-size:10.4px;color:#1a56d6;transform:scaleX(1.0757);-webkit-text-stroke:.25px currentColor">Reset filters</div>
<div class="t" style="left:1145.30px;top:116.01px;font-size:10.4px;color:#5f6368;transform:scaleX(1.0783)">Last update: 3 hours ago</div>
<div class="t" style="left:289.80px;top:169.00px;font-size:9.7px;color:#fff;transform:scaleX(1.0343)">Total clicks</div>
<div class="t" style="left:274.81px;top:189.01px;font-size:23.8px;color:#fff;transform:scaleX(0.9908)">679K</div>
<div class="t" style="left:425.70px;top:169.00px;font-size:9.7px;color:#fff;transform:scaleX(1.0268)">Total impressions</div>
<div class="t" style="left:411.20px;top:189.01px;font-size:23.8px;color:#fff;transform:scaleX(1.0309)">40.4M</div>
<div class="t" style="left:561.30px;top:169.00px;font-size:9.7px;color:#757575;transform:scaleX(0.9468)">Average CTR</div>
<div class="t" style="left:547.09px;top:189.01px;font-size:23.8px;color:#616161;transform:scaleX(0.9137)">1.7%</div>
<div class="t" style="left:697.20px;top:169.00px;font-size:9.7px;color:#757575;transform:scaleX(1.0084)">Average position</div>
<div class="t" style="left:682.00px;top:189.01px;font-size:23.8px;color:#616161;transform:scaleX(0.9982)">23.6</div>
<div class="t" style="left:1163.20px;top:13.00px;font-size:9.2px;color:#fff;transform:scaleX(0.9724);z-index:5">274</div>
<div class="t" style="left:268.90px;top:253.01px;font-size:9.3px;color:#6e6e6e;transform:scaleX(0.9506)">Clicks</div>
<div class="t" style="left:274.00px;top:266.01px;font-size:9.3px;color:#6e6e6e;transform:scaleX(0.9135)">3.8K</div>
<div class="t" style="left:274.00px;top:323.01px;font-size:9.3px;color:#6e6e6e;transform:scaleX(0.9135)">2.5K</div>
<div class="t" style="left:274.00px;top:380.01px;font-size:9.3px;color:#6e6e6e;transform:scaleX(0.9135)">1.3K</div>
<div class="t" style="left:287.00px;top:437.01px;font-size:9.3px;color:#6e6e6e;transform:scaleX(1.0000)">0</div>
<div class="t" style="left:1207.80px;top:253.01px;font-size:9.3px;color:#6e6e6e;transform:scaleX(0.9749)">Impressions</div>
<div class="t" style="left:1231.80px;top:266.00px;font-size:9.3px;color:#6e6e6e;transform:scaleX(0.9329)">375K</div>
<div class="t" style="left:1231.80px;top:323.01px;font-size:9.3px;color:#6e6e6e;transform:scaleX(0.9329)">250K</div>
<div class="t" style="left:1231.80px;top:380.01px;font-size:9.3px;color:#6e6e6e;transform:scaleX(0.9329)">125K</div>
<div class="t" style="left:1231.90px;top:437.01px;font-size:9.3px;color:#6e6e6e;transform:scaleX(1.0000)">0</div>
<div class="t" style="left:289.50px;top:453.00px;font-size:9.3px;color:#6e6e6e;transform:scaleX(1.0438)">7/13/24</div>
<div class="t" style="left:364.71px;top:453.00px;font-size:9.3px;color:#6e6e6e;transform:scaleX(1.0438)">8/12/24</div>
<div class="t" style="left:442.43px;top:453.00px;font-size:9.3px;color:#6e6e6e;transform:scaleX(1.0438)">9/12/24</div>
<div class="t" style="left:517.44px;top:453.00px;font-size:9.3px;color:#6e6e6e;transform:scaleX(1.0439)">10/13/24</div>
<div class="t" style="left:595.16px;top:453.00px;font-size:9.3px;color:#6e6e6e;transform:scaleX(1.0643)">11/13/24</div>
<div class="t" style="left:672.88px;top:453.00px;font-size:9.3px;color:#6e6e6e;transform:scaleX(1.0439)">12/14/24</div>
<div class="t" style="left:753.29px;top:453.00px;font-size:9.3px;color:#6e6e6e;transform:scaleX(1.0438)">1/14/25</div>
<div class="t" style="left:828.50px;top:453.00px;font-size:9.3px;color:#6e6e6e;transform:scaleX(1.0438)">2/13/25</div>
<div class="t" style="left:903.72px;top:453.00px;font-size:9.3px;color:#6e6e6e;transform:scaleX(1.0438)">3/15/25</div>
<div class="t" style="left:981.43px;top:453.00px;font-size:9.3px;color:#6e6e6e;transform:scaleX(1.0438)">4/15/25</div>
<div class="t" style="left:1059.15px;top:453.00px;font-size:9.3px;color:#6e6e6e;transform:scaleX(1.0438)">5/16/25</div>
<div class="t" style="left:1136.87px;top:453.00px;font-size:9.3px;color:#6e6e6e;transform:scaleX(1.0438)">6/16/25</div>
<div class="t" style="left:1063.90px;top:206.01px;font-size:10.5px;color:#595959;transform:scaleX(0.9358);font-weight:700;z-index:5">Wednesday, Jul 9</div>
<div class="t" style="left:1081.50px;top:233.01px;font-size:11px;color:#757575;transform:scaleX(0.9386);z-index:5">Clicks</div>
<div class="t" style="left:1163.70px;top:233.01px;font-size:11px;color:#5a5a5a;transform:scaleX(0.9413);-webkit-text-stroke:.25px currentColor;z-index:5">2,504</div>
<div class="t" style="left:1081.13px;top:260.00px;font-size:11px;color:#757575;transform:scaleX(0.9728);z-index:5">Impressions</div>
<div class="t" style="left:1151.50px;top:260.00px;font-size:11px;color:#5a5a5a;transform:scaleX(0.9585);-webkit-text-stroke:.25px currentColor;z-index:5">323,182</div>
</div></body></html>
